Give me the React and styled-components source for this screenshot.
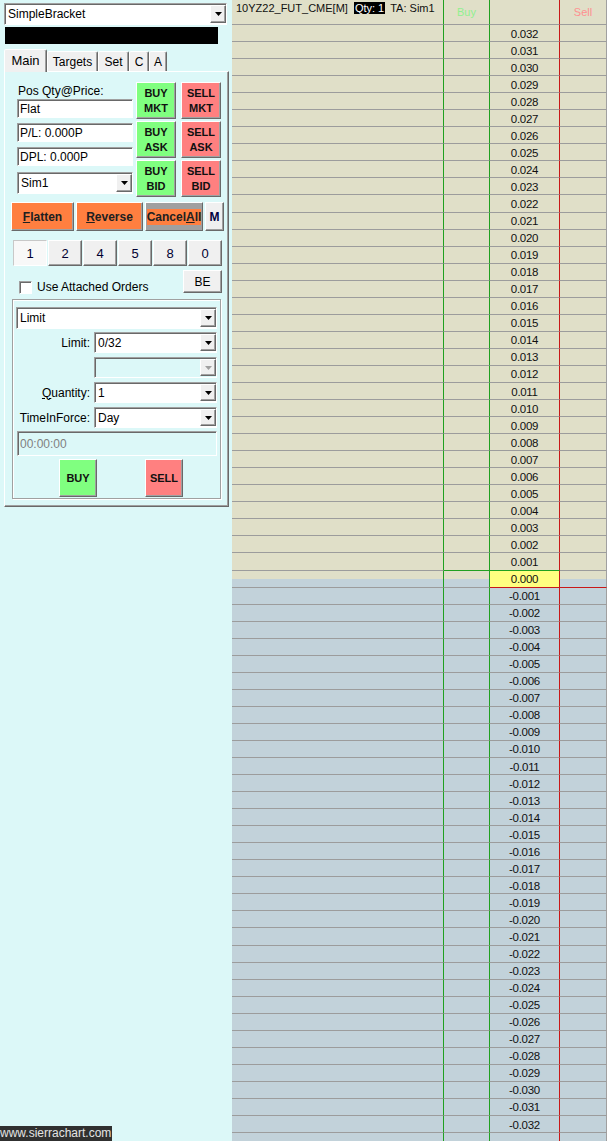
import React from 'react'
import styled, { createGlobalStyle, css } from 'styled-components'

const C = {
  cyan: '#dcf8f8',
  face: '#f0f0f0',
  tan: '#e0dfc8',
  blue: '#c2d2da',
  grid: '#9c9c9c',
  green: '#20a020',
  red: '#c81818',
  buy: '#80ff80',
  sell: '#ff8080',
  orange: '#ff7f40',
  yellow: '#ffff80',
}

const raised = css`
  border: 1px solid;
  border-color: #fff #696969 #696969 #fff;
  box-shadow: inset -1px -1px 0 #a0a0a0;
`

const sunken = css`
  border: 1px solid;
  border-color: #a0a0a0 #fff #fff #a0a0a0;
  box-shadow: inset 1px 1px 0 #696969;
`

const GlobalStyle = createGlobalStyle`
  html, body { margin: 0; padding: 0; }
  body {
    background: ${C.cyan};
    font-family: "Liberation Sans", Arial, sans-serif;
    color: #000;
  }
  #root { height: 1141px; }
`

const Page = styled.div`
  display: flex;
  height: 1141px;
  overflow: hidden;
`

const LeftPane = styled.div`
  box-sizing: border-box;
  width: 232px;
  flex: none;
  display: flex;
  flex-direction: column;
  padding: 3px 0 0 4px;
  font-size: 12px;
`

const ComboBox = styled.div`
  box-sizing: border-box;
  flex: none;
  width: ${p => p.$w}px;
  height: ${p => p.$h || 22}px;
  margin-top: ${p => p.$mt || 0}px;
  margin-left: ${p => p.$ml || 0}px;
  background: ${p => (p.$disabled ? C.cyan : '#fff')};
  ${sunken}
  display: flex;
  align-items: stretch;
  padding-left: 3px;
`

const ComboText = styled.span`
  flex: 1;
  display: flex;
  align-items: center;
  white-space: nowrap;
  overflow: hidden;
`

const ArrowBtn = styled.span`
  box-sizing: border-box;
  width: 16px;
  margin: 1px 0;
  background: ${C.face};
  ${raised}
  display: flex;
  align-items: center;
  justify-content: center;
`

const Arrow = ({ disabled }) => (
  <svg width="7" height="4" viewBox="0 0 7 4">
    <polygon points="0,0 7,0 3.5,4" fill={disabled ? '#a0a0a0' : '#000'} />
  </svg>
)

const Combo = ({ value, disabled, ...rest }) => (
  <ComboBox $disabled={disabled} {...rest}>
    <ComboText>{value}</ComboText>
    <ArrowBtn>
      <Arrow disabled={disabled} />
    </ArrowBtn>
  </ComboBox>
)

const BlackBar = styled.div`
  width: 213px;
  height: 17px;
  margin: 2px 0 0 1px;
  background: #000;
`

const TabStrip = styled.div`
  display: flex;
  align-items: flex-end;
  height: 23px;
  margin-top: 5px;
  margin-bottom: -1px;
  position: relative;
  z-index: 1;
`

const Tab = styled.div`
  box-sizing: border-box;
  width: ${p => p.$w}px;
  height: ${p => (p.$active ? 23 : 20)}px;
  margin-bottom: ${p => (p.$active ? 0 : 1)}px;
  background: ${C.face};
  border: 1px solid;
  border-bottom: none;
  border-color: #fff #696969 transparent #fff;
  box-shadow: inset -1px 0 0 #a0a0a0;
  border-radius: 2px 2px 0 0;
  display: flex;
  align-items: ${p => (p.$active ? 'flex-start' : 'center')};
  padding-top: ${p => (p.$active ? 3 : 0)}px;
  justify-content: center;
  font-size: ${p => (p.$active ? 13 : 12)}px;
`

const TabPanel = styled.div`
  box-sizing: border-box;
  width: 225px;
  height: 436px;
  background: ${C.cyan};
  border: 1px solid;
  border-color: #fff #696969 #696969 #fff;
  box-shadow: inset -1px -1px 0 #a0a0a0;
  display: flex;
  flex-direction: column;
`

const TopGrid = styled.div`
  display: flex;
  margin-top: 10px;
  padding-left: 12px;
`

const FieldCol = styled.div`
  width: 116px;
  display: flex;
  flex-direction: column;
`

const FieldLabel = styled.div`
  height: 14px;
  line-height: 14px;
  margin-top: 2px;
  padding-left: 1px;
`

const TextField = styled.div`
  box-sizing: border-box;
  width: ${p => p.$w || 116}px;
  height: ${p => p.$h || 19}px;
  margin-top: ${p => p.$mt || 0}px;
  margin-left: ${p => p.$ml || 0}px;
  flex: none;
  background: ${p => (p.$disabled ? C.cyan : '#fff')};
  color: ${p => (p.$disabled ? '#808080' : '#000')};
  ${sunken}
  display: flex;
  align-items: center;
  padding-left: 2px;
`

const ButtonCol = styled.div`
  display: flex;
  flex-direction: column;
  gap: 2px;
  margin-left: ${p => p.$ml}px;
`

const OrderButton = styled.div`
  box-sizing: border-box;
  width: ${p => p.$w || 40}px;
  height: ${p => p.$h || 37}px;
  background: ${p => (p.$side === 'buy' ? C.buy : C.sell)};
  ${raised}
  display: flex;
  align-items: center;
  justify-content: center;
  text-align: center;
  font-weight: bold;
  font-size: 11px;
  line-height: 15px;
  color: #101010;
`

const ActionRow = styled.div`
  display: flex;
  gap: 2px;
  margin-top: 5px;
  padding-left: 6px;
`

const ActionButton = styled.div`
  box-sizing: border-box;
  width: ${p => p.$w}px;
  height: 29px;
  background: ${p => p.$bg};
  ${raised}
  display: flex;
  align-items: center;
  justify-content: center;
  font-weight: bold;
  font-size: 12px;
  color: ${p => p.$color || '#202020'};
`

const Highlight = styled.span`
  background: ${C.orange};
  padding: 1px 0;
`

const NumberRow = styled.div`
  display: flex;
  gap: 1px;
  margin-top: 9px;
  padding-left: 8px;
`

const NumberButton = styled.div`
  box-sizing: border-box;
  width: 34px;
  height: 26px;
  background: ${p => (p.$active ? '#f8f8f8' : C.face)};
  border: 1px solid;
  border-color: ${p => (p.$active ? '#c8c8c8 #fff #fff #c8c8c8' : '#fff #696969 #696969 #fff')};
  box-shadow: ${p => (p.$active ? 'none' : 'inset -1px -1px 0 #a0a0a0')};
  display: flex;
  align-items: center;
  justify-content: center;
  font-size: 13px;
  color: #000030;
`

const CheckRow = styled.div`
  display: flex;
  align-items: flex-start;
  height: 23px;
  margin-top: 4px;
`

const CheckGroup = styled.label`
  display: flex;
  align-items: center;
  gap: 5px;
  margin: 10px 0 0 14px;
  height: 14px;
`

const CheckBox = styled.span`
  box-sizing: border-box;
  width: 13px;
  height: 13px;
  background: #fff;
  ${sunken}
`

const FaceButton = styled.div`
  box-sizing: border-box;
  width: 39px;
  height: 23px;
  margin-left: auto;
  margin-right: 6px;
  background: ${C.face};
  ${raised}
  display: flex;
  align-items: center;
  justify-content: center;
  font-size: 12px;
`

const GroupBox = styled.div`
  box-sizing: border-box;
  width: 209px;
  height: 200px;
  margin: 6px 0 0 7px;
  border: 1px solid #a0a0a0;
  box-shadow: inset 1px 1px 0 #fff, 1px 1px 0 #fff;
  display: flex;
  flex-direction: column;
`

const FormRow = styled.div`
  display: flex;
  align-items: center;
  margin-top: ${p => p.$mt}px;
`

const FormLabel = styled.div`
  width: 77px;
  text-align: right;
  margin-right: 4px;
  white-space: nowrap;
`

const BuySellRow = styled.div`
  display: flex;
  gap: 48px;
  margin-top: 3px;
  padding-left: 46px;
`

const Watermark = styled.div`
  margin: auto 0 0 -4px;
  align-self: flex-start;
  height: 15px;
  line-height: 15px;
  padding: 0 1px 0 0;
  background: #303030;
  color: #e4e4e4;
  font-size: 12px;
`

const Ladder = styled.div`
  flex: 1;
  display: flex;
  flex-direction: column;
  background: ${C.tan};
  font-size: 11px;
`

const sideBg = side => {
  if (side === 'bid') return C.blue
  if (side === 'split') return `linear-gradient(${C.tan} 50%, ${C.blue} 50%)`
  return C.tan
}

const LadderRow = styled.div`
  flex: ${p => (p.$fill ? '1' : 'none')};
  display: grid;
  grid-template-columns: 212px 46px 70px 47px;
  height: ${p => (p.$header ? '25px' : p.$fill ? 'auto' : '17.05px')};
  background: ${p => sideBg(p.$side)};
`

const Cell = styled.div`
  box-sizing: border-box;
  min-width: 0;
  border-right: 1px solid ${p => p.$v};
  border-bottom: ${p => (p.$noLine ? 'none' : `1px solid ${p.$h || C.grid}`)};
  background: ${p => p.$bg || 'transparent'};
  display: flex;
  align-items: center;
  justify-content: center;
  color: ${p => p.$color || '#101010'};
  white-space: nowrap;
`

const PriceCell = styled(Cell)`
  font-size: 11.5px;
  letter-spacing: -0.3px;
  padding-top: 1px;
`

const HeaderInfo = styled(Cell)`
  justify-content: flex-start;
  align-items: flex-start;
  padding: 2px 0 0 4px;
  line-height: 12px;
`

const QtyTag = styled.span`
  background: #000;
  color: #fff;
  margin: 0 5px 0 6px;
  padding: 0 1px;
`

const VLINES = [C.green, C.green, C.red, '#a0a0a0']

const prices = Array.from({ length: 65 }, (_, i) => 32 - i)

const fmt = n => (n / 1000).toFixed(3)

export default function App() {
  return (
    <>
      <GlobalStyle />
      <Page>
        <LeftPane>
          <Combo value="SimpleBracket" $w={223} $h={22} />
          <BlackBar />
          <TabStrip>
            <Tab $w={43} $active>Main</Tab>
            <Tab $w={51}>Targets</Tab>
            <Tab $w={31}>Set</Tab>
            <Tab $w={20}>C</Tab>
            <Tab $w={18}>A</Tab>
          </TabStrip>
          <TabPanel>
            <TopGrid>
              <FieldCol>
                <FieldLabel>Pos Qty@Price:</FieldLabel>
                <TextField $mt={1}>Flat</TextField>
                <TextField $mt={5}>P/L: 0.000P</TextField>
                <TextField $mt={5}>DPL: 0.000P</TextField>
                <Combo value="Sim1" $w={116} $h={22} $mt={6} />
              </FieldCol>
              <ButtonCol $ml={3}>
                <OrderButton $side="buy">BUY<br />MKT</OrderButton>
                <OrderButton $side="buy">BUY<br />ASK</OrderButton>
                <OrderButton $side="buy">BUY<br />BID</OrderButton>
              </ButtonCol>
              <ButtonCol $ml={5}>
                <OrderButton $side="sell">SELL<br />MKT</OrderButton>
                <OrderButton $side="sell">SELL<br />ASK</OrderButton>
                <OrderButton $side="sell">SELL<br />BID</OrderButton>
              </ButtonCol>
            </TopGrid>

            <ActionRow>
              <ActionButton $w={63} $bg={C.orange}><u>F</u>latten</ActionButton>
              <ActionButton $w={67} $bg={C.orange}><u>R</u>everse</ActionButton>
              <ActionButton $w={58} $bg="#a0a0a0">
                <Highlight>Cancel<u>A</u>ll</Highlight>
              </ActionButton>
              <ActionButton $w={19} $bg={C.face} $color="#000040">M</ActionButton>
            </ActionRow>

            <NumberRow>
              {['1', '2', '4', '5', '8', '0'].map((n, i) => (
                <NumberButton key={n} $active={i === 0}>{n}</NumberButton>
              ))}
            </NumberRow>

            <CheckRow>
              <CheckGroup>
                <CheckBox />
                Use Attached Orders
              </CheckGroup>
              <FaceButton>BE</FaceButton>
            </CheckRow>

            <GroupBox>
              <Combo value="Limit" $w={201} $h={22} $mt={7} $ml={3} />
              <FormRow $mt={3}>
                <FormLabel>Limit:</FormLabel>
                <Combo value="0/32" $w={123} $h={21} />
              </FormRow>
              <FormRow $mt={4}>
                <FormLabel />
                <Combo value="" $w={123} $h={21} disabled />
              </FormRow>
              <FormRow $mt={4}>
                <FormLabel><u>Q</u>uantity:</FormLabel>
                <Combo value="1" $w={123} $h={21} />
              </FormRow>
              <FormRow $mt={4}>
                <FormLabel>TimeInForce:</FormLabel>
                <Combo value="Day" $w={123} $h={21} />
              </FormRow>
              <TextField $w={200} $h={25} $mt={3} $ml={4} $disabled>00:00:00</TextField>
              <BuySellRow>
                <OrderButton $side="buy" $w={38} $h={38}>BUY</OrderButton>
                <OrderButton $side="sell" $w={38} $h={38}>SELL</OrderButton>
              </BuySellRow>
            </GroupBox>
          </TabPanel>

          <Watermark>www.sierrachart.com</Watermark>
        </LeftPane>

        <Ladder>
          <LadderRow $header>
            <HeaderInfo $v={VLINES[0]}>
              10YZ22_FUT_CME[M]<QtyTag>Qty: 1</QtyTag>TA: Sim1
            </HeaderInfo>
            <Cell $v={VLINES[1]} $color="#90f090">Buy</Cell>
            <Cell $v={VLINES[2]} />
            <Cell $v={VLINES[3]} $color="#ff9090">Sell</Cell>
          </LadderRow>

          {prices.map(p => {
            const side = p > 0 ? 'ask' : p === 0 ? 'split' : 'bid'
            const hl = p === 1 ? C.green : undefined
            const hr = p === 0 ? C.red : undefined
            return (
              <LadderRow key={p} $side={side}>
                <Cell $v={VLINES[0]} />
                <Cell $v={VLINES[1]} $h={hl} />
                <PriceCell $v={VLINES[2]} $h={hl || hr} $bg={p === 0 ? C.yellow : undefined}>
                  {fmt(p)}
                </PriceCell>
                <Cell $v={VLINES[3]} $h={hr} />
              </LadderRow>
            )
          })}

          <LadderRow $fill $side="bid">
            {VLINES.map((v, i) => (
              <Cell key={i} $v={v} $noLine />
            ))}
          </LadderRow>
        </Ladder>
      </Page>
    </>
  )
}
